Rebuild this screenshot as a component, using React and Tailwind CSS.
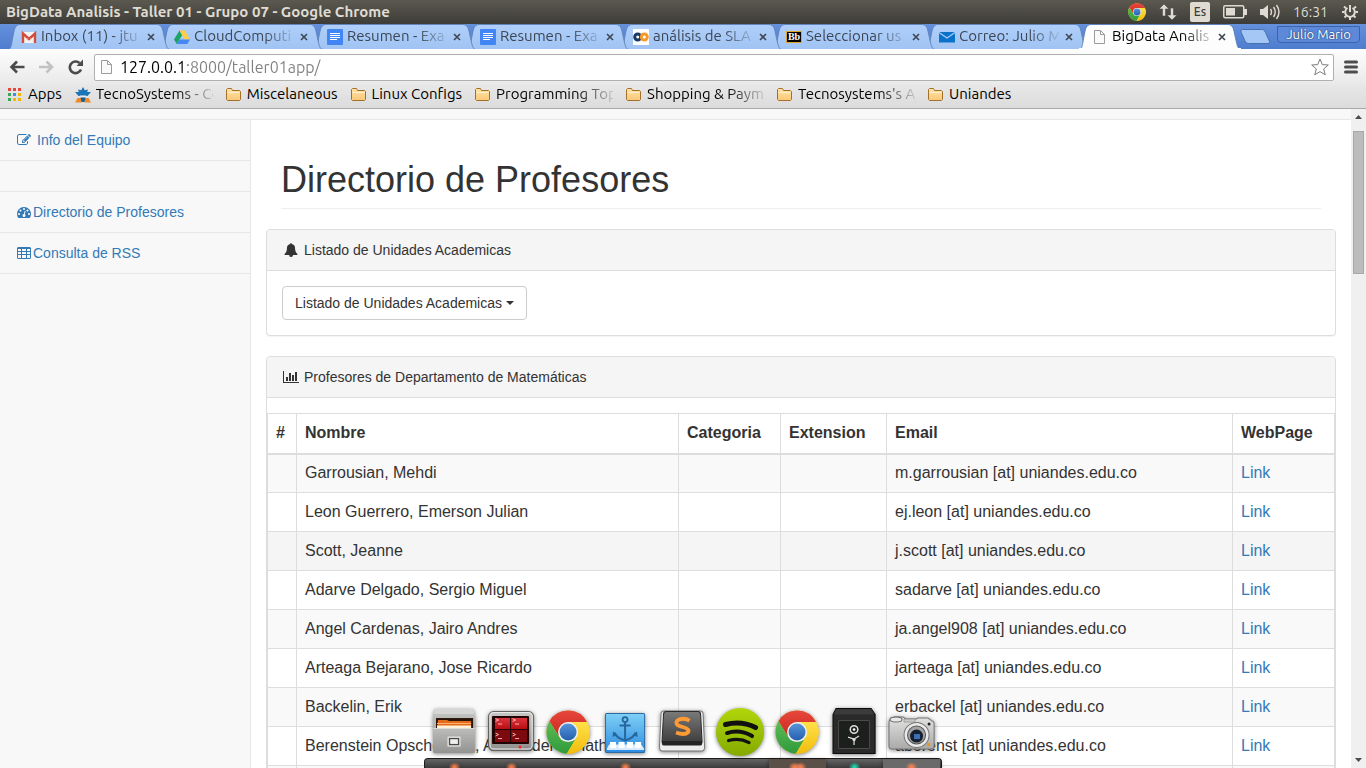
import React from "react";

const UI = "font-['Ubuntu','Noto_Sans',sans-serif]";

/* ---------- favicons ---------- */

function Gmail() {
  return (
    <svg viewBox="0 0 16 16" className="size-4 shrink-0" aria-hidden="true">
      <rect x="1" y="3" width="14" height="11" rx="1" fill="#f4f4f4" />
      <path d="M2 14V4.500L8 10l6-5.500V14" fill="none" stroke="#d54b3d" strokeWidth="2.400" />
      <path d="M3.500 13l3-3.500M12.500 13L9.500 9.500" stroke="#ddd" strokeWidth=".8" />
    </svg>
  );
}

function Drive() {
  return (
    <svg viewBox="0 0 16 16" className="size-4 shrink-0" aria-hidden="true">
      <path d="M5.500 1.500L0 10.500l2.700 4.500L8.200 6z" fill="#1da362" />
      <path d="M5.500 1.500h5.300l5.200 9h-5.400z" fill="#ffcf48" />
      <path d="M5.500 10.500H16L13.300 15H2.700z" fill="#4687f4" />
    </svg>
  );
}

function Docs() {
  return (
    <svg viewBox="0 0 16 16" className="size-4 shrink-0" aria-hidden="true">
      <rect width="16" height="16" rx="1" fill="#4285f4" />
      <path d="M3 4.500h10M3 6.500h10M3 8.500h10M3 10.500h7" stroke="#fff" strokeWidth="1" />
    </svg>
  );
}

function Rings() {
  return (
    <svg viewBox="0 0 16 16" className="size-4 shrink-0" aria-hidden="true">
      <rect width="16" height="16" fill="#fff" />
      <circle cx="4.700" cy="8" r="3" fill="none" stroke="#1b3a63" strokeWidth="3" />
      <circle cx="11.300" cy="8" r="3" fill="none" stroke="#f49a2c" strokeWidth="3" />
    </svg>
  );
}

function Blackboard() {
  return (
    <span aria-hidden="true" className="flex h-3 w-4 shrink-0 items-center justify-center border border-[#e0a526] bg-black font-['Liberation_Serif',serif] text-[10px] leading-none font-bold text-white">
      Bb
    </span>
  );
}

function Mail() {
  return (
    <svg viewBox="0 0 16 16" className="size-4 shrink-0" aria-hidden="true">
      <path d="M0 3h16v10.500H0z" fill="#0a72c8" />
      <path d="M0 3.500l8 5.500 8-5.500" fill="none" stroke="#a9c9f5" strokeWidth="1.400" />
    </svg>
  );
}

function Page() {
  return (
    <svg viewBox="0 0 16 16" className="size-4 shrink-0" aria-hidden="true">
      <path d="M2.500 1.500h6l4 4v9h-10z" fill="#fafafa" stroke="#9b9b9b" />
      <path d="M8.500 1.500v4h4" fill="none" stroke="#9b9b9b" />
    </svg>
  );
}

function Folder() {
  return (
    <svg viewBox="0 0 16 16" className="size-4 shrink-0" aria-hidden="true">
      <path d="M.5 12.500v-10l1-1h4l1 2h7l1 1v8l-1 1h-12z" fill="url(#folder)" stroke="#a3702c" />
      <path d="M1.500 5.500h12" stroke="#fff1cf" />
    </svg>
  );
}

function AppsGrid() {
  const colors = ["#e8453c", "#e8453c", "#e8453c", "#3aa757", "#4688f1", "#f4b400", "#3aa757", "#f4b400", "#f4b400"];
  return (
    <svg viewBox="0 0 14 14" className="size-3.5 shrink-0" aria-hidden="true">
      {colors.map((c, i) => (
        <rect key={i} x={(i % 3) * 5} y={Math.floor(i / 3) * 5} width="3" height="3" fill={c} />
      ))}
    </svg>
  );
}

function Tecno() {
  return (
    <svg viewBox="0 0 16 16" className="size-4 shrink-0" aria-hidden="true">
      <path d="M8 0l1.800 3.200L13 2.500l-.8 2.500H16l-3.500 4h-9L0 5h3.800L3 2.500l3.200.7z" fill="#1c76b5" />
      <path d="M4.500 8.500h7l-1.500 1H6z" fill="#f4f4f4" />
      <path d="M0 15.500l2.500-4.500H6l.5 4.500zM16 15.500L13.500 11H10l-.5 4.500z" fill="#f08a24" />
      <path d="M5.500 10.500h5L9.500 15h-3z" fill="#1a5e93" />
    </svg>
  );
}

function ChromeDisc() {
  return (
    <g>
      <circle r="21.500" fill="#ffd320" />
      <path d="M-18.600 -10.800A21.500 21.500 0 0 1 19 -10H0L-8.700 5z" fill="url(#cred)" />
      <path d="M-18.600 -10.800A21.500 21.500 0 0 0 -1 21.500L8.700 5H-8.700z" fill="url(#cgreen)" />
      <path d="M19 -10A21.500 21.500 0 0 1 -1 21.500L8.700 5L0 -10z" fill="url(#cyellow)" />
      <circle r="10" fill="#f2f2f2" />
      <circle r="8.500" fill="url(#cblue)" />
    </g>
  );
}

/* ---------- desktop bar ---------- */

function DesktopBar() {
  return (
    <header className={`${UI} flex h-6 shrink-0 items-center justify-between bg-linear-to-b from-[#5b594f] to-[#3d3c38] pr-[7px] pl-1.5 text-[#dfdbd2]`}>
      <h1 className="truncate text-[15px] font-bold">BigData Analisis - Taller 01 - Grupo 07 - Google Chrome</h1>
      <div className="flex shrink-0 items-center gap-[13px]">
        <svg viewBox="-22 -22 44 44" className="size-[18px]" aria-hidden="true">
          <ChromeDisc />
        </svg>
        <svg viewBox="0 0 18 16" className="h-4 w-[18px]" aria-hidden="true">
          <path d="M5 0l5 5H6.500v7h-3V5H0zM13 16l-5-5h3.500V4h3v7H18z" fill="#dfdbd2" stroke="#4b4a44" strokeWidth=".6" />
        </svg>
        <span className="flex h-5 w-5 items-center justify-center rounded-xs bg-[#dfdbd2] text-xs font-medium text-[#3d3c38]">Es</span>
        <svg viewBox="0 0 24 14" className="h-3.5 w-6" aria-hidden="true">
          <rect x=".75" y=".75" width="20" height="12" rx="1.500" fill="none" stroke="#dfdbd2" strokeWidth="1.500" />
          <path d="M3 3h9v7.500H3zM21 4h3v6h-3z" fill="#dfdbd2" />
        </svg>
        <svg viewBox="0 0 20 16" className="h-4 w-5" aria-hidden="true">
          <path d="M0 5h3l5-4v14l-5-4H0z" fill="#dfdbd2" />
          <path d="M10.500 5q2 3 0 6M13.500 3q3.500 5 0 10M16.500 1q5 7 0 14" fill="none" stroke="#dfdbd2" strokeWidth="1.400" />
        </svg>
        <time className="text-sm">16:31</time>
        <svg viewBox="0 0 18 18" className="size-[18px]" aria-hidden="true">
          <path d="M6.500 5A4.800 4.800 0 1 0 11.500 5" fill="none" stroke="#dfdbd2" strokeWidth="2" />
          <path d="M9 2v7" stroke="#dfdbd2" strokeWidth="2" />
          <path d="M1 9h2.500M14.500 9H17M3 3.500l2 1.800M15 3.500l-2 1.800M3.500 14.500l1.800-1.800M14.500 14.500l-1.800-1.800M9 14v3" stroke="#dfdbd2" strokeWidth="2" />
        </svg>
      </div>
    </header>
  );
}

/* ---------- browser ---------- */

const tabs = [
  { title: "Inbox (11) - jtu", icon: Gmail, z: "z-[7]" },
  { title: "CloudComputi", icon: Drive, z: "z-[6]" },
  { title: "Resumen - Exa", icon: Docs, z: "z-[5]" },
  { title: "Resumen - Exa", icon: Docs, z: "z-[4]" },
  { title: "análisis de SLA", icon: Rings, z: "z-[3]" },
  { title: "Seleccionar us", icon: Blackboard, z: "z-[2]" },
  { title: "Correo: Julio M", icon: Mail, z: "z-[1]" },
  { title: "BigData Analis", icon: Page, z: "z-[8]", active: true },
];

function Tab({ title, icon: Icon, z, active }) {
  return (
    <div className={`relative flex h-[25px] min-w-0 max-w-[153px] flex-1 items-center pl-[13px] ${z}`}>
      <svg viewBox="0 0 162 25" preserveAspectRatio="none" className="absolute top-0 left-0 h-full w-[calc(100%+9px)]" aria-hidden="true">
        <path
          d="M0 25.500C4 25 3 20 6.500 5Q8 .5 12 .5H149Q153 .5 154.500 5C158 20 158 25 162 25.500z"
          fill={active ? "#fdfdfd" : "url(#tab)"}
          stroke={active ? "#5d83bd" : "#6286bb"}
        />
        {active && <path d="M0 25h162" stroke="#fdfdfd" strokeWidth="2" />}
      </svg>
      <button
        type="button"
        role="tab"
        aria-selected={!!active}
        className={`relative flex min-w-0 flex-1 items-center gap-1 text-left text-[15px] whitespace-nowrap ${active ? "text-black" : "text-[#3c4654]"}`}
      >
        <Icon />
        <span className="min-w-0 flex-1 overflow-hidden [mask-image:linear-gradient(90deg,#000_70px,transparent_104px)]">{title}</span>
      </button>
      <button type="button" aria-label="Cerrar" className="relative flex w-5 shrink-0 items-center justify-center">
        <svg viewBox="0 0 8 8" className="size-2 shrink-0" aria-hidden="true">
          <path d="M1 1l6 6M7 1L1 7" stroke="#3d4653" strokeWidth="1.600" />
        </svg>
      </button>
    </div>
  );
}

function TabStrip() {
  return (
    <div className={`${UI} flex h-[25px] shrink-0 bg-linear-to-b from-[#6490dc] to-[#4f7dce] pr-1.5 pl-2`}>
      <div role="tablist" className="flex min-w-0 flex-1">
        {tabs.map((t, i) => (
          <Tab key={i} {...t} />
        ))}
        <button type="button" aria-label="Nueva pestaña" className="ml-2 self-center">
          <svg viewBox="0 0 30 15" className="h-[15px] w-[30px]" aria-hidden="true">
            <path d="M2.500 .5h20q2 0 3 3l4 9q.5 2-1.500 2H8.500q-2.500 0-3.500-2.500L1 3Q.5.5 2.500.5z" fill="#a5c7f6" stroke="#4870ae" />
          </svg>
        </button>
      </div>
      <button type="button" className="mt-0.5 h-[17px] w-[83px] shrink-0 truncate rounded-b-sm border border-[#3c63a8] bg-[#5d89d8] text-[13px] leading-[15px] text-white [text-shadow:0_0_2px_#223f73,0_0_1px_#223f73]">
        Julio Mario
      </button>
    </div>
  );
}

function Toolbar() {
  return (
    <div className="flex h-9 shrink-0 items-center bg-linear-to-b from-[#fdfdfd] to-[#e9e9e9] px-2">
      <div className="flex shrink-0 gap-3">
        <button type="button" aria-label="Atrás">
          <svg viewBox="0 0 18 16" className="h-4 w-[18px]" aria-hidden="true">
            <path d="M16.500 8H4M9 2.500L3.500 8 9 13.500" fill="none" stroke="#4b4b4b" strokeWidth="2.600" />
          </svg>
        </button>
        <button type="button" aria-label="Adelante">
          <svg viewBox="0 0 18 16" className="h-4 w-[18px]" aria-hidden="true">
            <path d="M1 8h12.500M8.500 2.500L14 8l-5.500 5.500" fill="none" stroke="#c2c2c2" strokeWidth="2.600" />
          </svg>
        </button>
        <button type="button" aria-label="Recargar">
          <svg viewBox="0 0 18 16" className="h-4 w-[18px]" aria-hidden="true">
            <path d="M13 10.500A5.800 5.800 0 1 1 11.500 4" fill="none" stroke="#4b4b4b" strokeWidth="2.600" />
            <path d="M15 .5V7H8.500z" fill="#4b4b4b" />
          </svg>
        </button>
      </div>
      <div className="ml-2 flex h-[27px] min-w-0 flex-1 items-center gap-[5px] rounded-xs border border-[#b0b0b0] bg-white px-1">
        <Page />
        <input
          aria-label="Dirección"
          defaultValue="127.0.0.1:8000/taller01app/"
          className={`${UI} min-w-0 flex-1 bg-[linear-gradient(90deg,#000_66px,#808080_66px)] bg-clip-text text-base leading-6 text-transparent outline-none`}
        />
        <button type="button" aria-label="Añadir a marcadores">
          <svg viewBox="0 0 18 18" className="size-[18px]" aria-hidden="true">
            <path d="M9 1l2.300 5.600 6 .4-4.600 3.900 1.500 5.900L9 13.600l-5.200 3.200 1.500-5.900L.7 7l6-.4z" fill="#fff" stroke="#7b7b7b" strokeLinejoin="round" />
          </svg>
        </button>
      </div>
      <button type="button" aria-label="Menú" className="ml-2.5 shrink-0">
        <svg viewBox="0 0 14 14" className="size-3.5" aria-hidden="true">
          <path d="M1.500 2h11M1.500 7h11M1.500 12h11" stroke="#4d4d4d" strokeWidth="3" strokeLinecap="round" />
        </svg>
      </button>
    </div>
  );
}

function Bookmark({ icon, label, fade }) {
  return (
    <a href="#" className="flex min-w-0 shrink-0 items-center gap-[5px]">
      {icon}
      <span className={`whitespace-nowrap ${fade ? "w-[117px] overflow-hidden [mask-image:linear-gradient(90deg,#000_80px,transparent_122px)]" : ""}`}>{label}</span>
    </a>
  );
}

function BookmarksBar() {
  return (
    <nav aria-label="Marcadores" className={`${UI} flex h-6 shrink-0 items-center gap-[13px] overflow-hidden border-b border-[#a9a9a9] bg-linear-to-b from-[#e7e7e7] to-[#dcdcdc] pb-1 pl-2 text-[15px] text-black`}>
      <Bookmark icon={<span className="pr-px"><AppsGrid /></span>} label="Apps" />
      <Bookmark icon={<Tecno />} label="TecnoSystems - Co" fade />
      <Bookmark icon={<Folder />} label="Miscelaneous" />
      <Bookmark icon={<Folder />} label="Linux Configs" />
      <Bookmark icon={<Folder />} label="Programming Top" fade />
      <Bookmark icon={<Folder />} label="Shopping & Paym" fade />
      <Bookmark icon={<Folder />} label="Tecnosystems's A" fade />
      <Bookmark icon={<Folder />} label="Uniandes" />
    </nav>
  );
}

/* ---------- page ---------- */

function Awesome({ d, wide }) {
  return (
    <svg viewBox={wide ? "0 0 2048 1792" : "0 0 1792 1792"} className={`h-3.5 shrink-0 fill-current ${wide ? "w-4" : "w-3.5"}`} aria-hidden="true">
      <path d={d} />
    </svg>
  );
}

const EDIT =
  "M888 1184l116-116-152-152-116 116v56h96v96h56zm440-720q-16-16-33 1l-350 350q-17 17-1 33t33-1l350-350q17-17 1-33zm80 594v190q0 119-84.5 203.5t-203.5 84.500h-832q-119 0-203.500-84.500t-84.500-203.500v-832q0-119 84.500-203.500t203.500-84.500h832q63 0 117 25 15 7 18 23 3 17-9 29l-49 49q-14 14-32 8-23-6-45-6h-832q-66 0-113 47t-47 113v832q0 66 47 113t113 47h832q66 0 113-47t47-113v-126q0-13 9-22l64-64q15-15 35-7t20 29zm-96-738l288 288-672 672h-288v-288zm444 132l-92 92-288-288 92-92q28-28 68-28t68 28l152 152q28 28 28 68t-28 68z";
const BELL =
  "M912 1696q0-16-16-16-59 0-101.500-42.500t-42.500-101.500q0-16-16-16t-16 16q0 73 51.500 124.500t124.500 51.500q16 0 16-16zm816-288q0 52-38 90t-90 38h-448q0 106-75 181t-181 75-181-75-75-181h-448q-52 0-90-38t-38-90q50-42 91-88t85-119.500 74.500-158.500 50-206 19.500-260q0-152 117-282.500t307-158.500q-8-19-8-39 0-40 28-68t68-28 68 28 28 68q0 20-8 39 190 28 307 158.500t117 282.500q0 139 19.500 260t50 206 74.500 158.500 85 119.500 91 88z";
const BARS =
  "M640 896v512h-256v-512h256zm384-512v1024h-256v-1024h256zm1024 1152v128h-2048v-1536h128v1408h1920zm-640-896v768h-256v-768h256zm384-384v1152h-256v-1152h256z";
const GAUGE =
  "M384 1152q0-53-37.500-90.500t-90.500-37.500-90.500 37.500-37.500 90.500 37.500 90.500 90.500 37.500 90.500-37.500 37.500-90.500zm192-448q0-53-37.500-90.500t-90.500-37.500-90.500 37.500-37.500 90.500 37.500 90.500 90.500 37.500 90.500-37.500 37.500-90.500zm428 481l101-382q6-26-7.500-48.500t-38.500-29.500-48 6.500-30 39.500l-101 382q-60 5-107 43.500t-63 98.500q-20 77 20 146t117 89 146-20 89-117q16-60-6-117t-72-91zm660-33q0-53-37.500-90.500t-90.500-37.500-90.500 37.500-37.500 90.500 37.500 90.500 90.500 37.500 90.500-37.500 37.500-90.500zm-640-640q0-53-37.500-90.500t-90.500-37.500-90.500 37.500-37.500 90.500 37.500 90.500 90.500 37.500 90.500-37.500 37.500-90.500zm448 192q0-53-37.500-90.500t-90.500-37.500-90.500 37.500-37.500 90.500 37.500 90.500 90.500 37.500 90.500-37.500 37.500-90.500zm320 448q0 261-141 483-19 29-54 29h-1402q-35 0-54-29-141-221-141-483 0-182 71-348t191-286 286-191 348-71 348 71 286 191 191 286 71 348z";

function Sidebar() {
  const item = "flex h-[41px] items-center border-b border-[#e7e7e7] px-4 pl-[17px]";
  const link = "flex items-center";
  return (
    <nav aria-label="Principal" className="w-[251px] shrink-0 border-r border-[#e7e7e7] text-[#337ab7]">
      <ul>
        <li className={item}>
          <a href="#" className={`${link} gap-1.5`}>
            <Awesome d={EDIT} />
            Info del Equipo
          </a>
        </li>
        <li className="h-[31px] border-b border-[#e7e7e7]" />
        <li className={item}>
          <a href="#" className={`${link} gap-0.5`}>
            <Awesome d={GAUGE} />
            Directorio de Profesores
          </a>
        </li>
        <li className={item}>
          <a href="#" className={`${link} gap-0.5`}>
            <svg viewBox="0 0 14 14" className="size-3.5 shrink-0" aria-hidden="true">
              <path
                fillRule="evenodd"
                fill="currentColor"
                d="M1 1h12l1 1v10l-1 1H1l-1-1V2zM1 3v2h3V3zM5 3v2h4V3zM10 3v2h3V3zM1 6v2h3V6zM5 6v2h4V6zM10 6v2h3V6zM1 9v3h3V9zM5 9v3h4V9zM10 9v3h3V9z"
              />
            </svg>
            Consulta de RSS
          </a>
        </li>
      </ul>
    </nav>
  );
}

function Panel({ icon, title, children }) {
  return (
    <section className="mb-5 rounded-sm border border-[#ddd] bg-white shadow-[0_1px_1px_rgba(0,0,0,0.05)]">
      <h2 className="flex h-[41px] items-center gap-[5px] rounded-t-sm border-b border-[#ddd] bg-[#f5f5f5] px-4">
        <span className="flex w-4 justify-center">{icon}</span>
        {title}
      </h2>
      {children}
    </section>
  );
}

const professors = [
  ["Garrousian, Mehdi", "m.garrousian [at] uniandes.edu.co"],
  ["Leon Guerrero, Emerson Julian", "ej.leon [at] uniandes.edu.co"],
  ["Scott, Jeanne", "j.scott [at] uniandes.edu.co"],
  ["Adarve Delgado, Sergio Miguel", "sadarve [at] uniandes.edu.co"],
  ["Angel Cardenas, Jairo Andres", "ja.angel908 [at] uniandes.edu.co"],
  ["Arteaga Bejarano, Jose Ricardo", "jarteaga [at] uniandes.edu.co"],
  ["Backelin, Erik", "erbackel [at] uniandes.edu.co"],
  ["Berenstein Opscholtens, Alexander Jonathan", "aberenst [at] uniandes.edu.co"],
  ["", ""],
];

function Professors() {
  const cell = "h-[39px] border border-[#ddd] px-2 truncate";
  return (
    <table className="mt-[15px] w-full table-fixed border-collapse text-base leading-[22px]">
      <colgroup>
        <col className="w-[29px]" />
        <col />
        <col className="w-[102px]" />
        <col className="w-[106px]" />
        <col className="w-[346px]" />
        <col className="w-[102px]" />
      </colgroup>
      <thead>
        <tr className="text-left">
          {["#", "Nombre", "Categoria", "Extension", "Email", "WebPage"].map((h) => (
            <th key={h} className="h-10 border border-b-2 border-[#ddd] px-2">{h}</th>
          ))}
        </tr>
      </thead>
      <tbody>
        {professors.map(([name, email], i) => (
          <tr key={i} className={i === 2 ? "bg-[#f5f5f5]" : i % 2 === 0 ? "bg-[#f9f9f9]" : "bg-white"}>
            <td className={cell} />
            <td className={cell}>{name}</td>
            <td className={cell} />
            <td className={cell} />
            <td className={cell}>{email}</td>
            <td className={cell}>{email && <a href="#" className="text-[#337ab7]">Link</a>}</td>
          </tr>
        ))}
      </tbody>
    </table>
  );
}

function Scrollbar() {
  return (
    <div aria-hidden="true" className="flex w-[15px] shrink-0 flex-col items-center bg-[#f0f0f0]">
      <svg viewBox="0 0 7 4" className="mt-1.5 h-1 w-[7px] shrink-0">
        <path d="M0 4L3.500 0 7 4z" fill="#4b4b4b" />
      </svg>
      <div className="mt-3 h-[143px] w-[11px] shrink-0 border border-[#a8a8a8] bg-[#bcbcbc]" />
      <svg viewBox="0 0 7 4" className="mt-auto mb-1.5 h-1 w-[7px] shrink-0">
        <path d="M0 0h7L3.500 4z" fill="#4b4b4b" />
      </svg>
    </div>
  );
}

/* ---------- dock ---------- */

function DockIcon({ label, glow, double, lit, children }) {
  return (
    <button type="button" aria-label={label} className="flex flex-1 flex-col">
      <svg viewBox="0 0 57 68" className="w-full" aria-hidden="true">
        {lit && <rect y="59" width="57" height="9" fill={lit} />}
        {children}
        {glow && !double && <ellipse cx="28.500" cy="67" rx="6" ry="5" fill={glow} />}
        {glow && double && (
          <>
            <ellipse cx="25.500" cy="67" rx="6" ry="5" fill={glow} />
            <ellipse cx="31.500" cy="67" rx="6" ry="5" fill={glow} />
          </>
        )}
      </svg>
    </button>
  );
}

function DockChrome() {
  return (
    <svg x="4" y="8" width="48" height="48" viewBox="-24 -24 48 48">
      <ChromeDisc />
    </svg>
  );
}

function Dock() {
  return (
    <div className="absolute bottom-0 left-1/2 w-[518px] -translate-x-1/2">
      <div className="absolute inset-x-0 bottom-0 h-2.5 rounded-t-sm border border-b-0 border-[#1c1c1c] bg-linear-to-b from-[#666] to-[#3b3b3b]" />
      <div className="relative flex px-0.5 drop-shadow-[0_1px_2px_rgba(0,0,0,0.5)]">
        <DockIcon label="Archivos" glow="url(#glow)">
          <path d="M9 9h38l2 8v34q0 2-2 2H9q-2 0-2-2V17z" fill="url(#metal)" />
          <path d="M9 9h38l1 5H8z" fill="#d6d6d4" />
          <rect x="10" y="18" width="37" height="11" fill="#2a150b" />
          <path d="M12 20h9l2 1h22v8H11z" fill="#e46a1b" />
          <path d="M11 23.500h34" stroke="#ffb36b" />
          <path d="M11 25.500h34v3H11z" fill="#fff0d6" />
          <path d="M7 28h42v23q0 2-2 2H9q-2 0-2-2z" fill="url(#front)" />
          <path d="M7.500 28.500h41" stroke="#dadad8" />
          <rect x="21.500" y="36.500" width="13" height="10" rx="1.500" fill="#e4e4e2" stroke="#c9c9c7" />
          <rect x="23.500" y="38.500" width="9" height="6" fill="#efefed" stroke="#4a4a48" strokeWidth="1.300" />
        </DockIcon>
        <DockIcon label="Terminator" glow="url(#glow)">
          <rect x="5.500" y="11.500" width="45" height="39" rx="5" fill="url(#metal)" stroke="#62625f" />
          <rect x="7" y="12.500" width="42" height="36.500" rx="4" fill="none" stroke="#e9e9e7" />
          <rect x="9" y="16" width="37" height="28" rx="1" fill="#220405" />
          <path d="M12 18h15v11H12zM28 18h16v11H28z" fill="url(#red)" />
          <path d="M12 30h15v12H12zM28 30h16v12H28z" fill="#7d0a0f" />
          <path d="M12.500 18.500l3 1.500-3 1.500M15 24h4M29.500 18.500l3 1.500-3 1.500M32 24h4M12.500 33l3 1.500-3 1.500M15 38.500h4M29.500 33l3 1.500-3 1.500M32 38.500h4" fill="none" stroke="#ffc4c4" strokeWidth=".9" />
          <circle cx="37" cy="47" r="1.500" fill="#f22" />
          <path d="M41 47h5" stroke="#888" strokeWidth="1.500" />
        </DockIcon>
        <DockIcon label="Google Chrome">
          <DockChrome />
        </DockIcon>
        <DockIcon label="Docky" glow="url(#glow)">
          <rect x="8.500" y="13.500" width="39" height="39" rx="1" fill="url(#sea)" stroke="#2a6ca8" />
          <circle cx="28" cy="19.500" r="2.500" fill="none" stroke="#27679f" strokeWidth="1.800" />
          <path d="M28 22v18M22.500 25.500h11M17.500 32.500q1 5 10.500 8 9.500-3 10.500-8" fill="none" stroke="#27679f" strokeWidth="2" />
          <path d="M15.500 37l.5-5.500 4.500 3.500zM40.500 37l-.5-5.500-4.500 3.500z" fill="#27679f" />
          <path d="M10 48.500l2-4h32l3 4v1.500H10z" fill="#d9ecff" />
          <path d="M13 42h6v6h-6zM21.500 42h6v6h-6zM30 42h6v6h-6zM38 42h6v6h-6z" fill="#fff" />
        </DockIcon>
        <DockIcon label="Sublime Text">
          <path d="M10 11h36q3 0 3 3l1.500 33q0 4-3 4h-39q-3 0-3-4L7 14q0-3 3-3z" fill="#ededed" stroke="#777" />
          <path d="M12 11.500h32q2.500 0 2.500 3l1.500 27q0 2.500-2 2.500H10q-2 0-2-2.500l1.500-27q0-3 2.500-3z" fill="url(#steel)" stroke="#2b2b2b" />
          <path d="M8 41h40v3q0 1.500-2 1.500H10q-2 0-2-1.500z" fill="#242424" />
          <path d="M35.500 20.500q-5-3-10.500-1-4.500 2.500-1.500 5.500 2 1.500 6 2.200 6.500 1.800 4.500 5-3.500 3.300-12 .3" fill="none" stroke="#ff9a35" strokeWidth="3.800" />
        </DockIcon>
        <DockIcon label="Spotify">
          <circle cx="28" cy="32" r="24" fill="url(#lime)" />
          <path d="M13.500 24.500q16-4 30 3" fill="none" stroke="#111" strokeWidth="5" strokeLinecap="round" />
          <path d="M15 33q13-4 25 3" fill="none" stroke="#111" strokeWidth="4" strokeLinecap="round" />
          <path d="M16.500 40.500q11-3 20.500 2" fill="none" stroke="#111" strokeWidth="3.200" strokeLinecap="round" />
        </DockIcon>
        <DockIcon label="Chrome" glow="url(#glow)" double lit="#5b5047">
          <DockChrome />
        </DockIcon>
        <DockIcon label="Caja fuerte" glow="url(#teal)">
          <path d="M10 8.500h35l4 6v39H7v-39z" fill="#2a2a2a" stroke="#0c0c0c" />
          <path d="M10 9h35l3 5.500H8z" fill="#3b3b3b" />
          <rect x="12.500" y="20.500" width="31" height="28" rx="1" fill="#1d1f1c" stroke="#4a4a48" />
          <circle cx="28" cy="29.500" r="3.800" fill="#222" stroke="#ddd" strokeWidth="1.500" />
          <circle cx="28" cy="29.500" r="1.300" fill="#fff" />
          <path d="M28 39v6M28 39l-6-2M28 39l5-3" stroke="#ddd" strokeWidth="1.200" />
          <circle cx="28" cy="39.500" r="1.600" fill="#ddd" />
        </DockIcon>
        <DockIcon label="Captura" glow="url(#glow)" lit="#6a6a6a">
          <path d="M8 19l4-2h8l3 2h10l2-1h10l4 3q2 0 2 3v22q0 3-3 3H9q-3 0-3-3V22q0-2 2-3z" fill="url(#camera)" stroke="#777" />
          <ellipse cx="13" cy="19.500" rx="6" ry="2.500" fill="#e8e8e8" stroke="#666" />
          <path d="M21 19h11v3H21z" fill="#c9c9c7" stroke="#888" strokeWidth=".6" />
          <circle cx="33.500" cy="35" r="12.500" fill="#e9e9e9" stroke="#777" />
          <circle cx="33.500" cy="35" r="9" fill="#a4a4a4" stroke="#555" />
          <circle cx="33.500" cy="36" r="6.500" fill="#16202e" />
          <rect x="31" y="34" width="6" height="5" fill="#3e70b8" />
          <circle cx="46" cy="24" r="1.500" fill="#222" />
          <path d="M44 43h3v3h-3z" fill="#e8961e" />
        </DockIcon>
      </div>
    </div>
  );
}

function Gradient({ id, from, to }) {
  return (
    <linearGradient id={id} x1="0" y1="0" x2="0" y2="1">
      <stop offset="0" stopColor={from} />
      <stop offset="1" stopColor={to} />
    </linearGradient>
  );
}

function Glow({ id, color }) {
  return (
    <radialGradient id={id}>
      <stop offset="0" stopColor={color} />
      <stop offset=".3" stopColor={color} stopOpacity=".8" />
      <stop offset="1" stopColor={color} stopOpacity="0" />
    </radialGradient>
  );
}

function Definitions() {
  return (
    <svg className="absolute size-0" aria-hidden="true">
      <defs>
        <Gradient id="tab" from="#b0cffa" to="#9fc3f3" />
        <Gradient id="folder" from="#ffe3a6" to="#fbc877" />
        <Gradient id="cred" from="#e8473c" to="#c9281f" />
        <Gradient id="cgreen" from="#5dbb56" to="#2f9a3c" />
        <Gradient id="cyellow" from="#ffe04a" to="#f2bd0c" />
        <Gradient id="cblue" from="#5794d8" to="#235fae" />
        <Gradient id="metal" from="#c8c8c6" to="#8f8f8d" />
        <Gradient id="front" from="#bcbcba" to="#939391" />
        <Gradient id="camera" from="#e2e2e0" to="#a9a9a7" />
        <Gradient id="red" from="#d9353a" to="#b90d14" />
        <Gradient id="sea" from="#7fd0f5" to="#2c8be0" />
        <Gradient id="steel" from="#7a7a7a" to="#3a3a3a" />
        <Gradient id="lime" from="#b2d60a" to="#84aa00" />
        <Glow id="glow" color="#ff8350" />
        <Glow id="teal" color="#1fe3b8" />
      </defs>
    </svg>
  );
}

export default function App() {
  return (
    <div className="relative flex h-screen flex-col overflow-hidden bg-white">
      <Definitions />
      <DesktopBar />
      <TabStrip />
      <Toolbar />
      <BookmarksBar />
      <div className="flex min-h-0 flex-1 font-['Liberation_Sans',Arial,sans-serif] text-sm text-[#333]">
        <div className="flex min-w-0 flex-1 flex-col overflow-hidden bg-[#f8f8f8]">
          <div className="h-[11px] shrink-0 border-b border-[#e7e7e7]" />
          <div className="flex min-h-0 flex-1">
            <Sidebar />
            <main className="min-w-0 flex-1 overflow-hidden bg-white px-[15px]">
              <h1 className="mx-[15px] mt-10 mb-5 border-b border-[#eee] pb-2 text-4xl leading-10">Directorio de Profesores</h1>
              <Panel icon={<Awesome d={BELL} />} title="Listado de Unidades Academicas">
                <div className="p-[15px]">
                  <button type="button" className="flex h-[34px] items-center gap-1 rounded-sm border border-[#ccc] bg-white px-3">
                    Listado de Unidades Academicas
                    <svg viewBox="0 0 8 4" className="h-1 w-2" aria-hidden="true">
                      <path d="M0 0h8L4 4z" fill="#333" />
                    </svg>
                  </button>
                </div>
              </Panel>
              <Panel icon={<Awesome d={BARS} wide />} title="Profesores de Departamento de Matemáticas">
                <Professors />
              </Panel>
            </main>
          </div>
        </div>
        <Scrollbar />
      </div>
      <Dock />
    </div>
  );
}
